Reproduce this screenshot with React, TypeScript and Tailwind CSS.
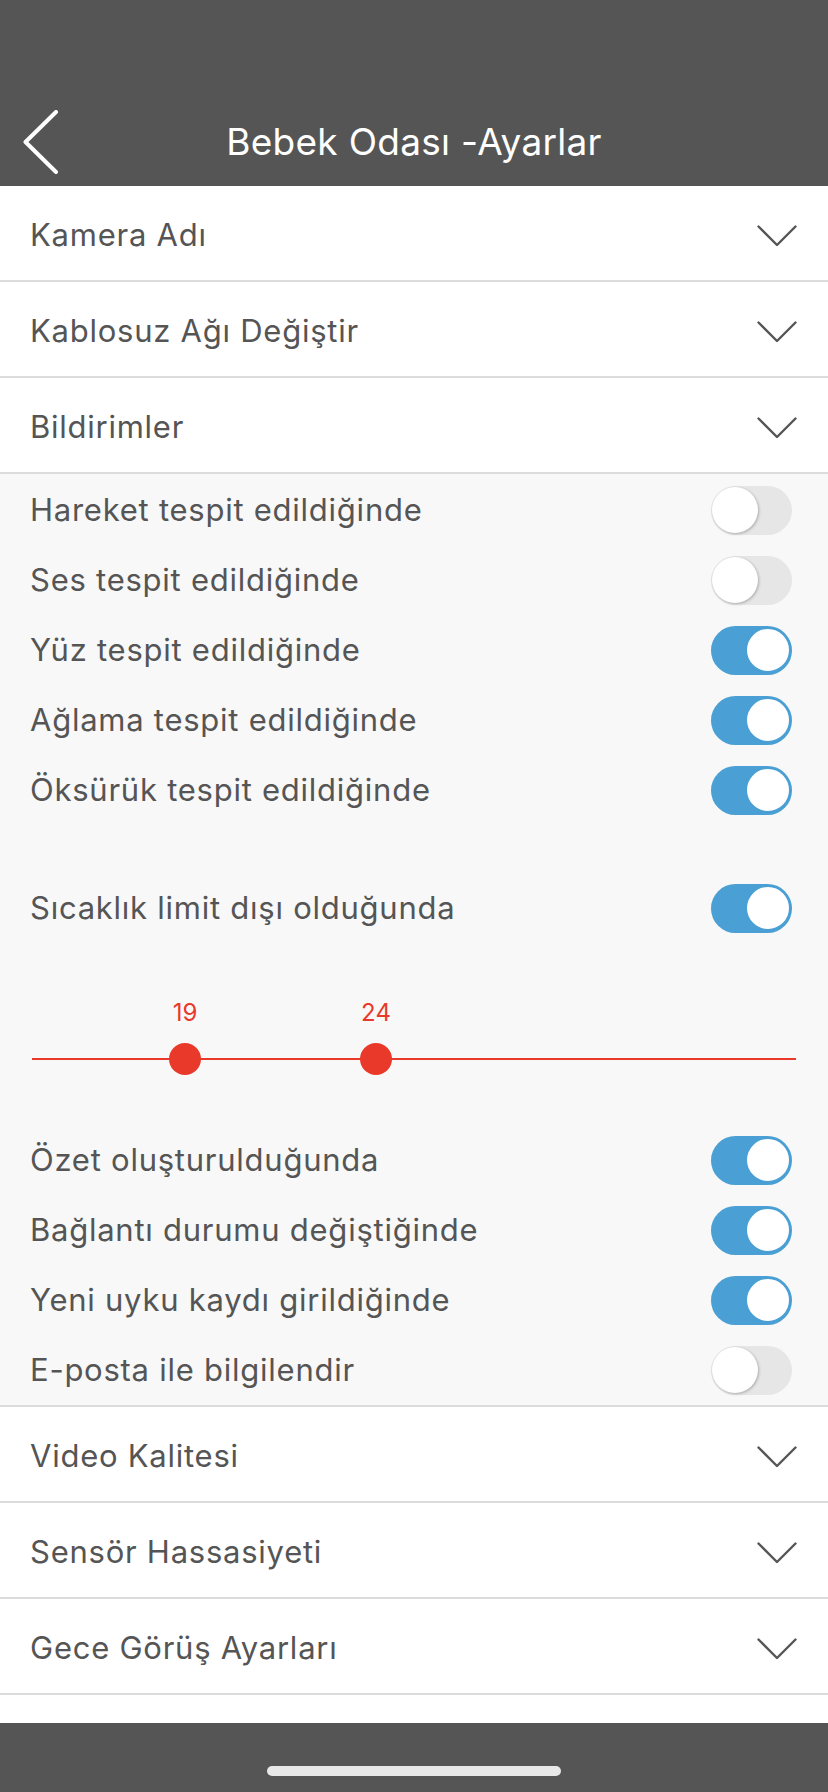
import { useState } from 'react';

const font = { fontFamily: 'Inter, "Noto Sans", sans-serif' };

function ChevronDown() {
  return (
    <svg width="40" height="22" viewBox="0 0 40 22" fill="none">
      <path d="M1.5 1.5L20 20L38.5 1.5" stroke="#555555" strokeWidth="2.4" strokeLinecap="round" strokeLinejoin="round" />
    </svg>
  );
}

function AccordionRow({ title }: { title: string }) {
  return (
    <div className="h-[96px] border-b-2 border-[#dcdcdc] bg-white flex items-center justify-between pl-[30px] pr-[31px] pt-[6px]">
      <span className="text-[31px] tracking-[0.75px] text-[#555555] -mt-[2px]">{title}</span>
      <ChevronDown />
    </div>
  );
}

function Toggle({ on, onChange }: { on: boolean; onChange: () => void }) {
  return (
    <button
      onClick={onChange}
      className={`relative w-[81px] h-[49px] rounded-full flex items-center px-[1px] ${
        on ? 'bg-[#4a9fd4] justify-end' : 'bg-[#e6e6e6] justify-start'
      }`}
    >
      <span
        className={`block w-[46px] h-[46px] rounded-full bg-white ${
          on ? 'border-2 border-[#4a9fd4]' : 'shadow-[1px_1px_3px_rgba(0,0,0,0.25)]'
        }`}
      />
    </button>
  );
}

interface ToggleItem {
  label: string;
  on: boolean;
}

function ToggleRow({ item, onChange }: { item: ToggleItem; onChange: () => void }) {
  return (
    <div className="h-[70px] flex items-center justify-between pl-[30px] pr-[36px]">
      <span className="text-[31px] tracking-[0.75px] text-[#555555]">{item.label}</span>
      <Toggle on={item.on} onChange={onChange} />
    </div>
  );
}

export default function App() {
  const [detect, setDetect] = useState<ToggleItem[]>([
    { label: 'Hareket tespit edildiğinde', on: false },
    { label: 'Ses tespit edildiğinde', on: false },
    { label: 'Yüz tespit edildiğinde', on: true },
    { label: 'Ağlama tespit edildiğinde', on: true },
    { label: 'Öksürük tespit edildiğinde', on: true },
  ]);
  const [tempOn, setTempOn] = useState(true);
  const [others, setOthers] = useState<ToggleItem[]>([
    { label: 'Özet oluşturulduğunda', on: true },
    { label: 'Bağlantı durumu değiştiğinde', on: true },
    { label: 'Yeni uyku kaydı girildiğinde', on: true },
    { label: 'E-posta ile bilgilendir', on: false },
  ]);

  const flip = (list: ToggleItem[], i: number) =>
    list.map((t, j) => (j === i ? { ...t, on: !t.on } : t));

  return (
    <div className="w-[828px] h-[1792px] flex flex-col bg-white overflow-hidden" style={font}>
      {/* Header */}
      <div className="h-[186px] bg-[#555555] pt-[98px] shrink-0">
        <div className="h-[88px] grid grid-cols-[100px_1fr_100px] items-center">
          <div className="pl-[23px] flex items-center">
            <svg width="36" height="64" viewBox="0 0 36 64" fill="none">
              <path d="M33 2L2.5 32L33 62" stroke="white" strokeWidth="4" strokeLinecap="round" strokeLinejoin="round" />
            </svg>
          </div>
          <h1 className="text-center text-white text-[37px] tracking-[0.3px]">Bebek Odası -Ayarlar</h1>
          <div />
        </div>
      </div>

      <AccordionRow title="Kamera Adı" />
      <AccordionRow title="Kablosuz Ağı Değiştir" />
      <AccordionRow title="Bildirimler" />

      {/* Notifications */}
      <div className="bg-[#f8f8f8] border-b-2 border-[#dcdcdc] pt-[1px]">
        {detect.map((t, i) => (
          <ToggleRow key={t.label} item={t} onChange={() => setDetect(flip(detect, i))} />
        ))}

        <div className="mt-[48px]">
          <ToggleRow item={{ label: 'Sıcaklık limit dışı olduğunda', on: tempOn }} onChange={() => setTempOn(!tempOn)} />
        </div>

        {/* Temperature range */}
        <div className="relative h-[182px] mx-[32px]">
          <div className="absolute left-0 right-0 top-[115px] h-[2px] bg-[#e8392a]" />
          {[
            { v: 19, x: 137 },
            { v: 24, x: 328 },
          ].map((p) => (
            <div key={p.v} className="absolute top-0 w-[32px] h-full" style={{ left: p.x }}>
              <span className="absolute top-[58px] left-1/2 -translate-x-1/2 text-[24px] leading-[24px] text-[#e8392a]">
                {p.v}
              </span>
              <span className="absolute top-[100px] left-0 w-[32px] h-[32px] rounded-full bg-[#e8392a]" />
            </div>
          ))}
        </div>

        {others.map((t, i) => (
          <ToggleRow key={t.label} item={t} onChange={() => setOthers(flip(others, i))} />
        ))}
      </div>

      <AccordionRow title="Video Kalitesi" />
      <AccordionRow title="Sensör Hassasiyeti" />
      <AccordionRow title="Gece Görüş Ayarları" />

      <div className="flex-1" />

      {/* Home bar */}
      <div className="h-[69px] bg-[#555555] shrink-0 flex justify-center pt-[43px]">
        <div className="w-[294px] h-[10px] rounded-full bg-[#e8e8e8]" />
      </div>
    </div>
  );
}
